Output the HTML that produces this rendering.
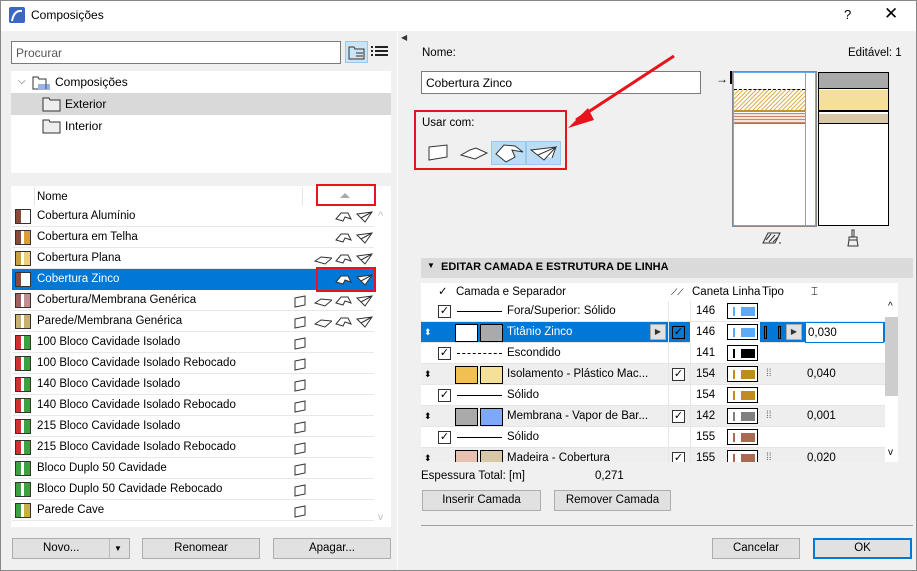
<!DOCTYPE html>
<html><head><meta charset="utf-8"><style>
*{box-sizing:border-box;margin:0;padding:0}
body{width:917px;height:571px;overflow:hidden;background:#f0f0f0;font-family:"Liberation Sans",sans-serif;font-size:11.5px;color:#000;position:relative}
.a{position:absolute}
.win{position:absolute;left:0;top:0;width:917px;height:571px;border:1px solid #888}
.btn{position:absolute;background:#e1e1e1;border:1px solid #adadad;text-align:center;line-height:19px;font-size:11.5px}
.row{position:absolute;left:12px;width:362px;height:21px;line-height:20px;border-bottom:1px solid #e8e8e8;background:#fff}
.row span{position:absolute;left:25px}
.sw{position:absolute;left:3px;top:3px;width:16px;height:15px;border:1px solid #333;background:#fff}
.tr{position:absolute;left:421px;width:464px;height:21px;line-height:20px;border-bottom:1px solid #e6e6e6;background:#fff}
.tr.g{background:#eeeeee}
.cb{position:absolute;width:13px;height:13px;border:1px solid #333;background:#fff;font-size:11px;line-height:11px;text-align:center}
.pen{position:absolute;left:306px;top:2px;width:31px;height:16px;border:1px solid #000;background:#fff}
.pen i{position:absolute;top:3px;height:9px}
</style></head><body>
<div class="win"></div>
<div class="a" style="left:1px;top:1px;width:915px;height:30px;background:#fff"></div>
<div class="a" style="left:9px;top:7px;width:16px;height:16px;background:#3a66c4;border-radius:2px"><svg width="16" height="16"><path d="M3 14 Q5 3 13 4" stroke="#fff" stroke-width="2" fill="none"/></svg></div>
<div class="a" style="left:31px;top:8px;font-size:12px">Composições</div>
<div class="a" style="left:844px;top:7px;font-size:13px">?</div>
<div class="a" style="left:884px;top:4px;font-size:17px">✕</div>
<div class="a" style="left:11px;top:41px;width:330px;height:23px;background:#fff;border:1px solid #7a7a7a;color:#555;padding:4px 4px;font-size:12px">Procurar</div>
<div class="a" style="left:345px;top:41px;width:23px;height:22px;background:#cce4f7;border:1px solid #99c9ef"></div>
<svg class="a" style="left:348px;top:45px" width="18" height="16"><path d="M1 2h5l1 2h9v10H1z" fill="none" stroke="#333"/><path d="M8 8h7M8 11h7" stroke="#333"/></svg>
<svg class="a" style="left:371px;top:46px" width="17" height="12"><path d="M0 1h2M4 1h13M0 5h2M4 5h13M0 9h2M4 9h13" stroke="#222" stroke-width="2"/></svg>
<div class="a" style="left:11px;top:71px;width:380px;height:102px;background:#fff"></div>
<div class="a" style="left:11px;top:93px;width:380px;height:22px;background:#d9d9d9"></div>
<div class="a" style="left:18px;top:76px;font-size:10px;color:#444">⌵</div>
<svg class="a" style="left:32px;top:75px" width="20" height="16"><path d="M1 2h5l1 2h7v10H1z" fill="none" stroke="#333"/><path d="M6 10h12M6 12h12M6 14h12" stroke="#3a66c4"/></svg>
<div class="a" style="left:55px;top:75px;font-size:12px">Composições</div>
<svg class="a" style="left:42px;top:96px" width="20" height="16"><path d="M1 2h6l1 2h10v11H1z" fill="#eee" stroke="#333"/></svg>
<div class="a" style="left:65px;top:97px;font-size:12px">Exterior</div>
<svg class="a" style="left:42px;top:118px" width="20" height="16"><path d="M1 2h6l1 2h10v11H1z" fill="#eee" stroke="#333"/></svg>
<div class="a" style="left:65px;top:119px;font-size:12px">Interior</div>
<div class="a" style="left:11px;top:186px;width:380px;height:341px;background:#fff"></div>
<div class="a" style="left:12px;top:187px;width:362px;height:20px;border-bottom:1px solid #e0e0e0"></div>
<div class="a" style="left:34px;top:187px;width:1px;height:20px;background:#e5e5e5"></div>
<div class="a" style="left:37px;top:191px">Nome</div>
<div class="a" style="left:302px;top:187px;width:1px;height:20px;background:#e5e5e5"></div>
<div class="a" style="left:340px;top:193px;border:5px solid transparent;border-bottom:5px solid #aaa;border-top:0"></div>
<div class="a" style="left:316px;top:184px;width:60px;height:22px;border:2px solid #e8141c"></div>
<div id="rows"></div>
<div class="a" style="left:378px;top:210px;color:#bbb;font-size:11px">^</div>
<div class="a" style="left:378px;top:512px;color:#bbb;font-size:10px">v</div>
<div class="btn" style="left:12px;top:538px;width:118px;height:21px"><span style="position:absolute;left:30px">Novo...</span><span style="position:absolute;left:96px;top:0;width:1px;height:19px;background:#bbb"></span><span style="position:absolute;left:101px;font-size:8px">▼</span></div>
<div class="btn" style="left:142px;top:538px;width:118px;height:21px">Renomear</div>
<div class="btn" style="left:273px;top:538px;width:118px;height:21px">Apagar...</div>
<div class="a" style="left:397px;top:32px;width:1px;height:538px;background:#fff"></div>
<div class="a" style="left:401px;top:33px;font-size:8px;color:#333">◀</div>
<div class="a" style="left:422px;top:47px">Nome:</div>
<div class="a" style="left:848px;top:47px">Editável: 1</div>
<div class="a" style="left:421px;top:71px;width:280px;height:23px;background:#fff;border:1px solid #7a7a7a;padding:4px;font-size:12px">Cobertura Zinco</div>
<div class="a" style="left:414px;top:110px;width:153px;height:60px;border:2px solid #e8141c"></div>
<div class="a" style="left:422px;top:117px">Usar com:</div>
<div class="a" style="left:491px;top:141px;width:35px;height:24px;background:#bcdcf4;border:1px solid #99c9ef"></div>
<div class="a" style="left:526px;top:141px;width:35px;height:24px;background:#bcdcf4;border:1px solid #99c9ef"></div>
<svg class="a" style="left:420px;top:140px" width="145" height="26"><path d="M9 7L27 5V17L9 20Z" fill="#fff" stroke="#333"/><path d="M41 15L50 10 L56 8L67 13L55 19ZM41 15L48 17" fill="#fff" stroke="#333"/><path d="M76 14L84 5L95 6L103 12L92 10L95 17L86 22Z" fill="#fff" stroke="#333"/><path d="M111 10L136 7L124 20ZM118 15L136 7L132 18" fill="#fff" stroke="#333"/></svg>
<svg class="a" style="left:560px;top:50px" width="125" height="90"><path d="M114 6L16 70" stroke="#e8141c" stroke-width="3"/><path d="M8 78L28 58L34 70Z" fill="#e8141c"/></svg>
<div class="a" style="left:716px;top:72px;font-size:12px">→</div>
<div class="a" style="left:730px;top:71px;width:3px;height:13px;background:#000"></div>
<div class="a" style="left:732px;top:71px;width:85px;height:156px;background:#fff;border:1px solid #888"></div>
<div class="a" style="left:733px;top:72px;width:83px;height:154px;border:1px solid #68a8f0"></div>
<div class="a" style="left:734px;top:89px;width:71px;height:23px;background:repeating-linear-gradient(135deg,#e0b050 0 1px,#fff 1px 3px);border-top:1px dashed #000;border-bottom:2px solid #c8902a"></div>
<div class="a" style="left:734px;top:113px;width:71px;height:11px;background:repeating-linear-gradient(0deg,#c88868 0 1px,#f4e4dc 1px 3px);border-bottom:1px solid #b07050"></div>
<div class="a" style="left:805px;top:72px;width:1px;height:153px;background:#68a8f0"></div>
<div class="a" style="left:818px;top:72px;width:71px;height:154px;background:#fff;border:1px solid #000"></div>
<div class="a" style="left:819px;top:73px;width:69px;height:16px;background:#a9a9a9;border-bottom:1px solid #000"></div>
<div class="a" style="left:819px;top:90px;width:69px;height:22px;background:#f5e09b;border-bottom:2px solid #000"></div>
<div class="a" style="left:819px;top:114px;width:69px;height:10px;background:#d8c8a8;border-bottom:1px solid #000"></div>
<svg class="a" style="left:762px;top:231px" width="20" height="14"><path d="M1 12L6 2H18L13 12Z" fill="none" stroke="#333"/><path d="M4 9L9 3M7 11L13 4M11 11L16 6M17 12H19" stroke="#333"/></svg>
<svg class="a" style="left:846px;top:229px" width="14" height="18"><path d="M6 1h2v7H6zM3 8h8v3H3zM3 11l-1 6h10l-1-6" fill="none" stroke="#333"/></svg>
<div class="a" style="left:421px;top:258px;width:492px;height:20px;background:#dadada"></div>
<div class="a" style="left:427px;top:261px;font-size:8px">▼</div>
<div class="a" style="left:441px;top:261px;font-weight:bold;font-size:11px">EDITAR CAMADA E ESTRUTURA DE LINHA</div>
<div class="a" style="left:421px;top:283px;width:477px;height:179px;background:#fff"></div>
<div class="a" style="left:421px;top:283px;width:464px;height:19px;line-height:19px">
<span class="a" style="left:17px">✓</span><span class="a" style="left:35px">Camada e Separador</span><span class="a" style="left:250px;font-size:9px">⟋⟋</span><span class="a" style="left:271px">Caneta Linha</span><span class="a" style="left:341px">Tipo</span><span class="a" style="left:390px">⌶</span>
</div>
<div class="a" style="left:0;top:0;width:917px;height:462px;overflow:hidden"><div id="trows"></div></div>
<div class="a" style="left:885px;top:317px;width:13px;height:79px;background:#cdcdcd"></div>
<div class="a" style="left:888px;top:301px;font-size:10px">^</div>
<div class="a" style="left:888px;top:447px;font-size:10px">v</div>
<div class="a" style="left:421px;top:470px">Espessura Total: [m]</div>
<div class="a" style="left:595px;top:470px">0,271</div>
<div class="btn" style="left:422px;top:490px;width:119px;height:21px">Inserir Camada</div>
<div class="btn" style="left:554px;top:490px;width:117px;height:21px">Remover Camada</div>
<div class="a" style="left:421px;top:525px;width:492px;height:1px;background:#a0a0a0"></div>
<div class="btn" style="left:712px;top:538px;width:88px;height:21px">Cancelar</div>
<div class="btn" style="left:813px;top:538px;width:99px;height:21px;border:2px solid #0078d7;line-height:17px">OK</div>
<script>
var L=[["Cobertura Alumínio","#8a4a3a","",0],["Cobertura em Telha","#8a4a3a","#d8a030",0],["Cobertura Plana","#c8a040","#e8d080",1],["Cobertura Zinco","#8a4a3a","",0],["Cobertura/Membrana Genérica","#a06060","#c09090",2],["Parede/Membrana Genérica","#c8b070","#c8b070",2],["100 Bloco Cavidade Isolado","#d03030","#40a040",3],["100 Bloco Cavidade Isolado Rebocado","#d03030","#40a040",3],["140 Bloco Cavidade Isolado","#d03030","#40a040",3],["140 Bloco Cavidade Isolado Rebocado","#d03030","#40a040",3],["215 Bloco Cavidade Isolado","#d03030","#40a040",3],["215 Bloco Cavidade Isolado Rebocado","#d03030","#40a040",3],["Bloco Duplo 50 Cavidade","#40a040","#40a040",3],["Bloco Duplo 50 Cavidade Rebocado","#40a040","#40a040",3],["Parede Cave","#40a040","#c8b040",3]];
var wall='<path d="M2 4L12 2V11L2 13Z" fill="#fff" stroke="#333"/>',slab='<path d="M1 9L7 5L18 6L11 12Z" fill="#fff" stroke="#333"/>',roof='<path d="M1 9L6 3L13 3L16 9L10 7L8 11Z" fill="#fff" stroke="#333"/>',shell='<path d="M1 4L16 2L9 12ZM5 8L16 2" fill="#fff" stroke="#333"/>';
var h='';L.forEach(function(r,i){var y=206+i*21,sel=i==3;var ic='';var xs=[];if(r[3]==0)xs=[[335,roof],[356,shell]];else if(r[3]==1)xs=[[314,slab],[335,roof],[356,shell]];else if(r[3]==2)xs=[[293,wall],[314,slab],[335,roof],[356,shell]];else xs=[[293,wall]];xs.forEach(function(p){ic+='<svg style="position:absolute;left:'+(p[0]-12)+'px;top:4px" width="18" height="14">'+p[1]+'</svg>'});
h+='<div class="row" style="top:'+y+'px;'+(sel?'background:#0078d7;color:#fff;border-color:#0078d7':'')+'"><div class="sw" style="background:linear-gradient(90deg,'+r[1]+' 0 5px,#fff 5px 8px,'+(r[2]||'#fff')+' 8px)"></div><span>'+r[0]+'</span>'+ic+'</div>'});
h+='<div class="a" style="left:316px;top:267px;width:60px;height:25px;border:2px solid #e8141c"></div>';
document.getElementById('rows').innerHTML=h;
var T=[[0,"Fora/Superior: Sólido","146","#5aaaf8","","",""],[1,"Titânio Zinco","146","#5aaaf8","#fff","#aaa","0,030"],[0,"Escondido","141","#000","","","",1],[1,"Isolamento - Plástico Mac...","154","#c08c20","#f0c050","#f5e09b","0,040"],[0,"Sólido","154","#c08c20","","",""],[1,"Membrana - Vapor de Bar...","142","#808080","#aaa","#80a8f8","0,001"],[0,"Sólido","155","#a86a50","","",""],[1,"Madeira - Cobertura","155","#a86a50","#e8c0b0","#d8c8a8","0,020"]];
var t='';T.forEach(function(r,i){var y=301+i*21,sel=i==1,g=r[0]&&!sel;
var s='<div class="tr'+(g?' g':'')+'" style="top:'+y+'px;'+(sel?'background:#0078d7;color:#fff':'')+'">';
if(r[0]){s+='<span class="a" style="left:3px;font-size:9px">⬍</span><div class="a" style="left:34px;top:2px;width:23px;height:18px;border:1px solid #000;background:'+r[4]+'"></div><div class="a" style="left:59px;top:2px;width:23px;height:18px;border:1px solid #000;background:'+r[5]+'"></div><span class="a" style="left:86px">'+r[1]+'</span><div class="cb" style="left:251px;top:4px;'+(sel?'background:#0078d7;border-color:#000;color:#000':'')+'">✓</div>'+(r[6]?'<span class="a" style="left:386px">'+r[6]+'</span>':'')+(i>1?'<span class="a" style="left:345px;color:#666;font-size:10px">⁞⁞</span>':'')}
else{s+='<div class="cb" style="left:17px;top:4px">✓</div><div class="a" style="left:36px;top:10px;width:45px;height:0;border-top:1px '+(r[7]?'dashed':'solid')+' #000"></div><span class="a" style="left:86px">'+r[1]+'</span>'}
s+='<div class="a" style="left:247px;top:0;width:1px;height:21px;background:#e6e6e6"></div><div class="a" style="left:269px;top:0;width:1px;height:21px;background:#e6e6e6;'+(sel?'background:#fff;width:70px;':'')+'"></div><span class="a" style="left:275px;'+(sel?'color:#000':'')+'">'+r[2]+'</span><div class="pen"><i style="left:5px;width:2px;background:'+r[3]+'"></i><i style="left:13px;width:14px;background:'+r[3]+'"></i></div>';
if(sel)s+='<div class="a" style="left:384px;top:0;width:79px;height:21px;background:#fff;border:1px solid #0078d7;color:#000;padding-left:2px">0,030</div><div class="a" style="left:229px;top:2px;width:16px;height:16px;background:#e1e1e1;border:1px solid #aaa;color:#333;font-size:8px;text-align:center;line-height:14px">▶</div><div class="a" style="left:365px;top:2px;width:16px;height:16px;background:#e1e1e1;border:1px solid #aaa;color:#333;font-size:8px;text-align:center;line-height:14px">▶</div><div class="a" style="left:343px;top:4px;width:3px;height:13px;border:1px solid #000"></div><div class="a" style="left:357px;top:4px;width:3px;height:13px;border:1px solid #000"></div>';
t+=s+'</div>'});
document.getElementById('trows').innerHTML=t;
</script>
</body></html>
